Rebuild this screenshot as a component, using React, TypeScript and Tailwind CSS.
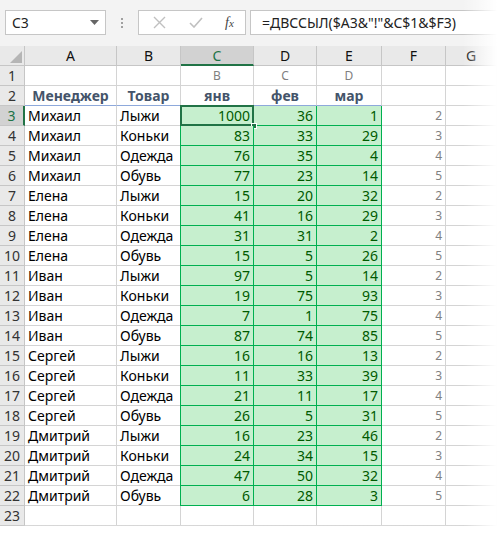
import React from 'react';

type Row = [string, string, number, number, number, number];

const rows: Row[] = [
  ['Михаил', 'Лыжи', 1000, 36, 1, 2],
  ['Михаил', 'Коньки', 83, 33, 29, 3],
  ['Михаил', 'Одежда', 76, 35, 4, 4],
  ['Михаил', 'Обувь', 77, 23, 14, 5],
  ['Елена', 'Лыжи', 15, 20, 32, 2],
  ['Елена', 'Коньки', 41, 16, 29, 3],
  ['Елена', 'Одежда', 31, 31, 2, 4],
  ['Елена', 'Обувь', 15, 5, 26, 5],
  ['Иван', 'Лыжи', 97, 5, 14, 2],
  ['Иван', 'Коньки', 19, 75, 93, 3],
  ['Иван', 'Одежда', 7, 1, 75, 4],
  ['Иван', 'Обувь', 87, 74, 85, 5],
  ['Сергей', 'Лыжи', 16, 16, 13, 2],
  ['Сергей', 'Коньки', 11, 33, 39, 3],
  ['Сергей', 'Одежда', 21, 11, 17, 4],
  ['Сергей', 'Обувь', 26, 5, 31, 5],
  ['Дмитрий', 'Лыжи', 16, 23, 46, 2],
  ['Дмитрий', 'Коньки', 24, 34, 15, 3],
  ['Дмитрий', 'Одежда', 47, 50, 32, 4],
  ['Дмитрий', 'Обувь', 6, 28, 3, 5],
];

const cols = 'grid grid-cols-[25px_92px_64px_73px_63px_65px_64px_1fr]';
const cell = 'h-5 border-r border-b border-[#d4d4d4] px-[3px] leading-[19px] whitespace-nowrap overflow-hidden';
const rowHead = 'h-5 border-r border-b border-[#c6c6c6] bg-[#e9e9e9] text-center leading-[19px] text-[#333]';
const green = 'h-5 border-r border-b border-[#00b050] bg-[#c6efce] text-[#005a00] text-right px-[3px] leading-[19px]';

const Toolbar = () => (
  <div className="h-[46px] bg-[#f3f3f3] flex items-start pt-[10px] pl-[5px]">
    <div className="w-[101px] h-[25px] bg-white border border-[#c6c6c6] flex items-center justify-between pl-[6px] pr-[6px]">
      <span className="text-[14px] text-[#222]">C3</span>
      <svg width="9" height="5" viewBox="0 0 9 5"><path d="M0 0h9L4.5 5z" fill="#666" /></svg>
    </div>
    <div className="w-[32px] h-[25px] flex flex-col items-center justify-center gap-[2px]">
      <span className="w-[2px] h-[2px] bg-[#a0a0a0]" />
      <span className="w-[2px] h-[2px] bg-[#a0a0a0]" />
      <span className="w-[2px] h-[2px] bg-[#a0a0a0]" />
    </div>
    <div className="w-[108px] h-[25px] bg-white border border-[#c6c6c6] flex items-center">
      <svg className="ml-[14px]" width="13" height="13" viewBox="0 0 13 13">
        <path d="M1 1l11 11M12 1L1 12" stroke="#c0c0c0" strokeWidth="1.4" />
      </svg>
      <svg className="ml-[23px]" width="14" height="11" viewBox="0 0 14 11">
        <path d="M1 6l4 4 8-9" stroke="#c0c0c0" strokeWidth="1.6" fill="none" />
      </svg>
      <span className="ml-[22px] text-[14px] italic text-[#444]" style={{ fontFamily: '"Liberation Serif", serif' }}>
        f<span className="text-[11px]">x</span>
      </span>
    </div>
    <div className="ml-[4px] flex-1 h-[25px] bg-white border border-[#c6c6c6] border-r-0 pl-[11px] leading-[23px] text-[14px] text-[#222] whitespace-nowrap">
      =ДВССЫЛ($A3&amp;"!"&amp;C$1&amp;$F3)
    </div>
  </div>
);

const Header = () => {
  const letters = ['A', 'B', 'C', 'D', 'E', 'F', 'G'];
  return (
    <div className={cols + ' bg-[#e9e9e9]'}>
      <div className="h-5 border-r border-b border-[#c6c6c6] relative">
        <svg className="absolute right-[2px] bottom-[2px]" width="12" height="12" viewBox="0 0 12 12">
          <path d="M12 0v12H0z" fill="#b5b5b5" />
        </svg>
      </div>
      {letters.map((l) =>
        l === 'C' ? (
          <div key={l} className="h-5 bg-[#d2d2d2] border-r border-[#c6c6c6] border-b-2 border-b-[#217346] text-center leading-[19px] text-[#217346]">
            {l}
          </div>
        ) : (
          <div key={l} className="h-5 border-r border-b border-[#c6c6c6] text-center leading-[19px] text-[#111]">
            {l}
          </div>
        )
      )}
    </div>
  );
};

export default function App() {
  return (
    <div className="relative w-[497px] h-[533px] overflow-hidden bg-white text-[14px]" style={{ fontFamily: '"Noto Sans", sans-serif' }}>
      <Toolbar />
      <Header />
      {/* row 1 */}
      <div className={cols}>
        <div className={rowHead}>1</div>
        <div className={cell} />
        <div className={cell} />
        <div className={cell + ' text-center text-[12px] text-[#808080]'}>B</div>
        <div className={cell + ' text-center text-[12px] text-[#808080]'}>C</div>
        <div className={cell + ' text-center text-[12px] text-[#808080]'}>D</div>
        <div className={cell} />
        <div className={cell} />
      </div>
      {/* row 2 - table header */}
      <div className={cols}>
        <div className={rowHead}>2</div>
        {['Менеджер', 'Товар', 'янв', 'фев', 'мар'].map((h) => (
          <div key={h} className="h-5 border-r border-[#d4d4d4] border-b border-b-[#8ea9db] text-center font-bold text-[#44546a] leading-[19px]">
            {h}
          </div>
        ))}
        <div className={cell} />
        <div className={cell} />
      </div>
      {rows.map((r, i) => {
        const n = i + 3;
        const selected = n === 3;
        return (
          <div key={n} className={cols}>
            {selected ? (
              <div className="h-5 bg-[#d2d2d2] border-b border-[#c6c6c6] border-r-2 border-r-[#217346] text-center leading-[19px] text-[#217346]">
                {n}
              </div>
            ) : (
              <div className={rowHead}>{n}</div>
            )}
            <div className={cell + ' text-black'}>{r[0]}</div>
            <div className={cell + ' text-black'}>{r[1]}</div>
            <div className={green + ' relative shadow-[-1px_0_0_#00b050]'}>
              {r[2]}
              {selected && (
                <>
                  <div className="absolute -left-[1px] -top-[1px] -right-[1px] -bottom-[1px] border-2 border-[#217346]" />
                  <div className="absolute -right-[4px] -bottom-[4px] w-[6px] h-[6px] bg-[#217346] border border-white" />
                </>
              )}
            </div>
            <div className={green}>{r[3]}</div>
            <div className={green}>{r[4]}</div>
            <div className={cell + ' text-right text-[12px] text-[#808080]'}>{r[5]}</div>
            <div className={cell} />
          </div>
        );
      })}
      {/* row 23 */}
      <div className={cols}>
        <div className={rowHead}>23</div>
        {[0, 1, 2, 3, 4, 5, 6].map((k) => (
          <div key={k} className={cell} />
        ))}
      </div>
      {/* torn-edge fade */}
      <div className="absolute top-0 right-0 w-[34px] h-full bg-gradient-to-r from-transparent to-white" />
      <div className="absolute left-0 bottom-0 w-full h-[8px] bg-gradient-to-b from-transparent to-white" />
    </div>
  );
}
